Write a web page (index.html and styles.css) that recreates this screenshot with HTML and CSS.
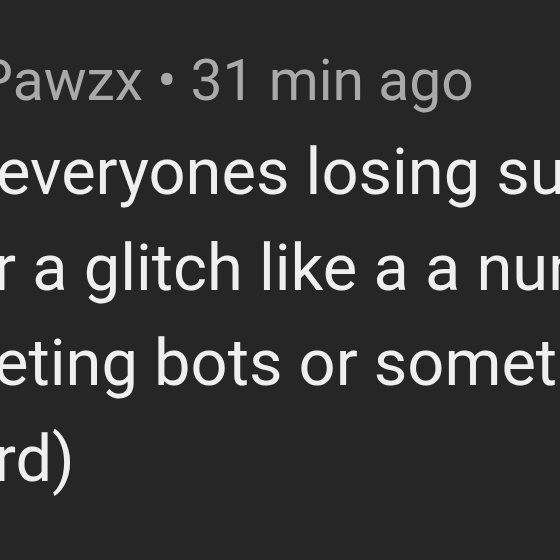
FILE: index.html
```html
<!DOCTYPE html>
<html>
<head>
<meta charset="utf-8">
<link rel="stylesheet" href="styles.css">
</head>
<body>
<div class="view">
  <div class="comment">
    <div class="meta">Pawzx • 31 min ago</div>
    <div class="text">
      <div class="line l1">everyones losing subs</div>
      <div class="line l2">r a glitch like a a number</div>
      <div class="line l3">eting bots or something</div>
      <div class="line l4">rd)</div>
    </div>
  </div>
</div>
</body>
</html>
```
FILE: styles.css
```css
html, body {
  margin: 0;
  padding: 0;
  background: #262626;
}
.view {
  width: 560px;
  height: 560px;
  overflow: hidden;
  background: #262626;
  font-family: Roboto, "Liberation Sans", sans-serif;
}
.comment {
  padding-top: 45px;
  display: flex;
  flex-direction: column;
  gap: 8px;
}
.meta {
  font-size: 57px;
  line-height: 72px;
  color: #a9a9a9;
  white-space: nowrap;
  margin-left: -23px;
}
.text {
  color: #efefef;
  font-size: 65px;
  line-height: 95.6px;
}
.line {
  white-space: nowrap;
}
.l1 { margin-left: -4px; }
.l2 { margin-left: -6px; }
.l3 { margin-left: -6px; }
.l4 { margin-left: -6px; }
```
